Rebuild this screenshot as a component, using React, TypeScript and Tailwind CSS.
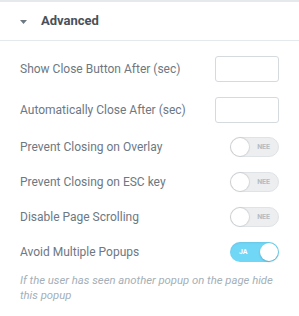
import React from "react";

function NumberRow({ label }: { label: string }) {
  return (
    <div className="flex h-[26px] items-center justify-between">
      <span className="text-[12px] text-[#6d7882]">{label}</span>
      <input
        type="text"
        className="h-[26px] w-[64px] rounded-[3px] border border-[#d5dadf] bg-white outline-none"
      />
    </div>
  );
}

function Toggle({ on }: { on: boolean }) {
  if (on) {
    return (
      <div className="relative h-[20px] w-[49px] rounded-full bg-[#71d7f7] shadow-[inset_0_1px_2px_rgba(0,0,0,0.08)]">
        <span className="absolute left-[9px] top-0 flex h-full items-center text-[7px] font-bold text-white">JA</span>
        <span className="absolute right-[1px] top-[1px] h-[18px] w-[18px] rounded-full bg-white shadow-[0_1px_2px_rgba(0,0,0,0.2)]" />
      </div>
    );
  }
  return (
    <div className="relative h-[20px] w-[49px] rounded-full border border-[#e0e3e6] bg-[#eceef0]">
      <span className="absolute right-[8px] top-0 flex h-full items-center text-[7px] font-bold text-[#b4bcc3]">NEE</span>
      <span className="absolute left-0 top-0 h-[18px] w-[18px] rounded-full bg-white shadow-[0_0_1px_1px_rgba(0,0,0,0.1)]" />
    </div>
  );
}

function SwitchRow({ label, on = false }: { label: string; on?: boolean }) {
  return (
    <div className="flex h-[20px] items-center justify-between">
      <span className="text-[12px] text-[#6d7882]">{label}</span>
      <Toggle on={on} />
    </div>
  );
}

export default function App() {
  return (
    <div className="h-[316px] w-[299px] overflow-hidden bg-white" style={{ fontFamily: "Roboto, sans-serif" }}>
      <div className="h-[2px] bg-[#e6e9ec]" />
      <div className="flex h-[39px] items-center border-b border-[#e6e9ec] pl-5">
        <svg width="7" height="4" viewBox="0 0 7 4" className="mt-[1px]">
          <path d="M0 0h7L3.5 4z" fill="#6d7882" />
        </svg>
        <span className="ml-[14px] text-[13px] font-bold text-[#495157]">Advanced</span>
      </div>
      <div className="flex flex-col pl-5 pr-5 pt-[15px]">
        <NumberRow label="Show Close Button After (sec)" />
        <div className="mt-[15px]">
          <NumberRow label="Automatically Close After (sec)" />
        </div>
        <div className="mt-[14px] flex flex-col gap-[15px]">
          <SwitchRow label="Prevent Closing on Overlay" />
          <SwitchRow label="Prevent Closing on ESC key" />
          <SwitchRow label="Disable Page Scrolling" />
          <SwitchRow label="Avoid Multiple Popups" on />
        </div>
        <p className="mt-[11px] text-[11.3px] italic leading-[15px] text-[#a4afb7]">
          If the user has seen another popup on the page hide this popup
        </p>
      </div>
    </div>
  );
}
